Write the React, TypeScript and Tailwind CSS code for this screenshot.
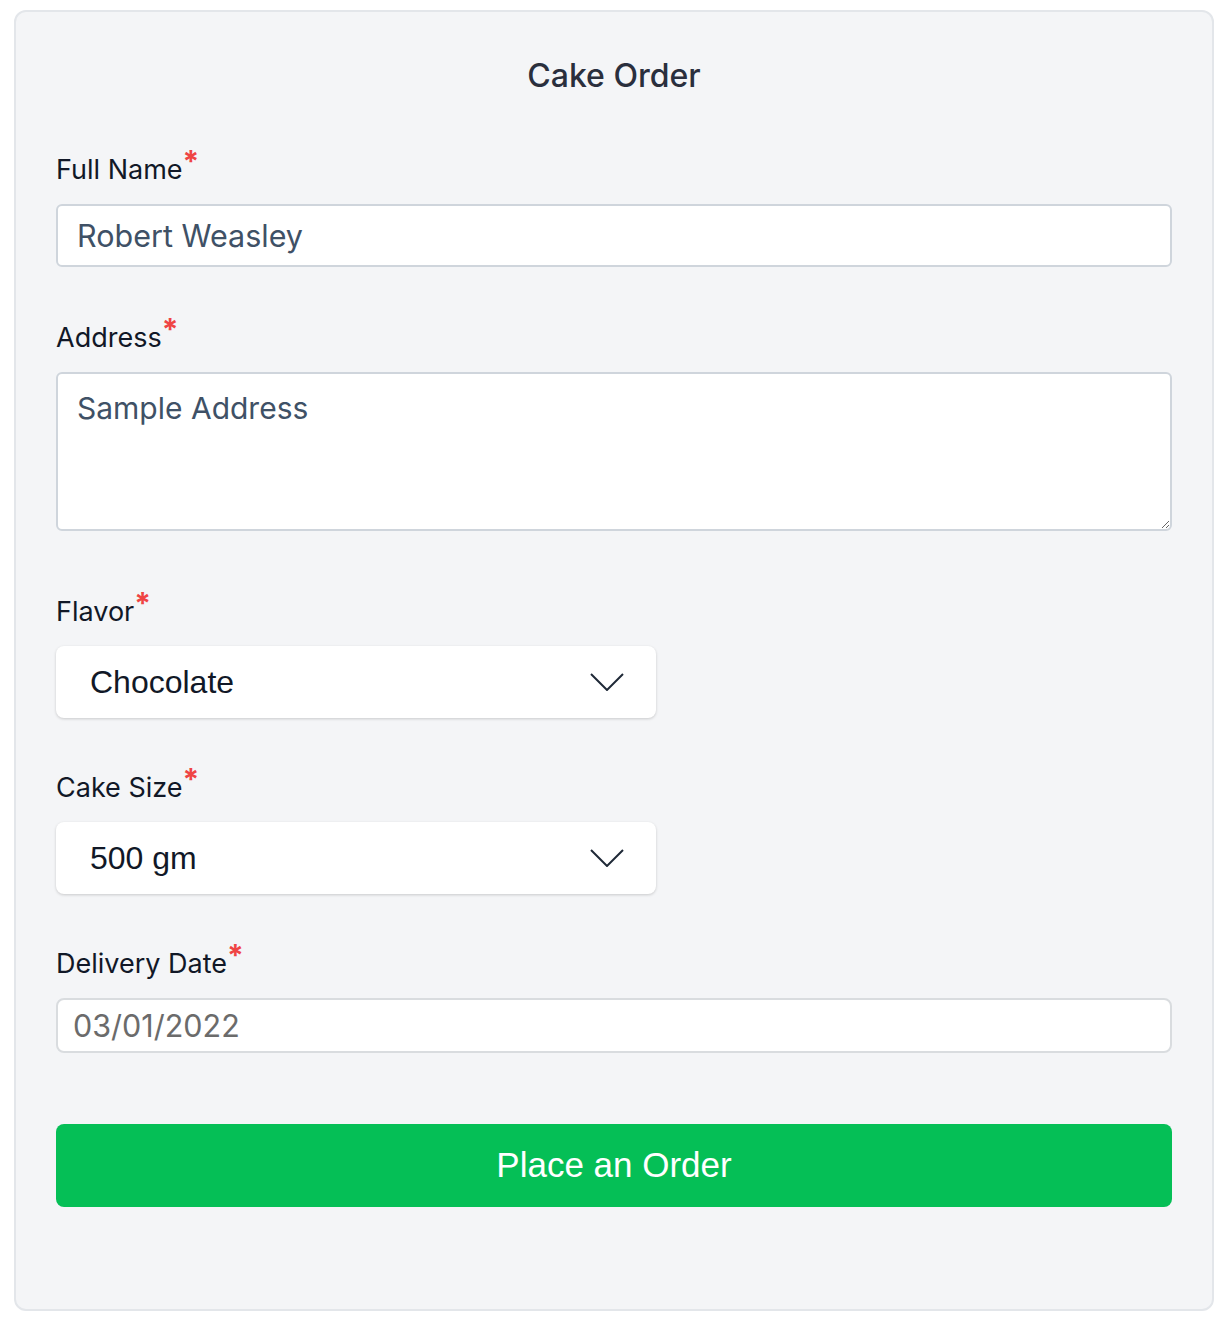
import React from 'react';

const font = { fontFamily: 'Inter, "Noto Sans", sans-serif' };

function Chevron() {
  return (
    <svg width="34" height="18" viewBox="0 0 34 18" fill="none" stroke="#1f2937" strokeWidth={2}>
      <path d="M1 1l16 16L33 1" />
    </svg>
  );
}

function Label({ text }: { text: string }) {
  return (
    <label className="block text-[27px] leading-[36px] text-[#111827]">
      {text}
      <span className="relative -top-[7px] text-[30px] leading-none font-bold text-[#ef4444]">*</span>
    </label>
  );
}

function SelectBox({ value }: { value: string }) {
  return (
    <div className="mt-4 flex h-[72px] w-[600px] items-center justify-between rounded-lg bg-white pl-[34px] pr-[32px] shadow-[0_1px_3px_rgba(0,0,0,0.18)]">
      <span className="text-[32px] text-[#111827] [font-family:'Liberation_Sans',Arial,sans-serif]">{value}</span>
      <Chevron />
    </div>
  );
}

export default function App() {
  return (
    <div className="bg-white p-[14px] pt-[10px]" style={font}>
      <div className="w-[1200px] rounded-xl border-2 border-[#e3e6ea] bg-[#f4f5f7] px-[40px] pt-[46px] pb-[102px]">
        <h1 className="text-center text-[32px] leading-[36px] font-medium text-[#2a2f3d]">Cake Order</h1>

        <div className="mt-[58px]">
          <Label text="Full Name" />
          <input
            readOnly
            value="Robert Weasley"
            className="mt-4 block h-[63px] w-full rounded-md border-2 border-[#cfd5dc] bg-white px-[19px] text-[30.5px] text-[#3f5166] outline-none"
          />
        </div>

        <div className="mt-[53px]">
          <Label text="Address" />
          <textarea
            readOnly
            value="Sample Address"
            className="mt-4 block h-[159px] w-full rounded-md border-2 border-[#cfd5dc] bg-white px-[19px] pt-[12px] text-[30px] text-[#3f5166] outline-none"
          />
        </div>

        <div className="mt-[63px]">
          <Label text="Flavor" />
          <SelectBox value="Chocolate" />
        </div>

        <div className="mt-[52px]">
          <Label text="Cake Size" />
          <SelectBox value="500 gm" />
        </div>

        <div className="mt-[52px]">
          <Label text="Delivery Date" />
          <input
            readOnly
            value="03/01/2022"
            className="mt-4 block h-[55px] w-full rounded-lg border-2 border-[#d9dcdf] bg-white px-[15px] text-[30.5px] text-[#6b6b6b] outline-none"
          />
        </div>

        <button className="mt-[71px] block h-[83px] w-full rounded-lg bg-[#05bf56] text-[35px] text-white [font-family:'Liberation_Sans',Arial,sans-serif]">
          Place an Order
        </button>
      </div>
    </div>
  );
}
